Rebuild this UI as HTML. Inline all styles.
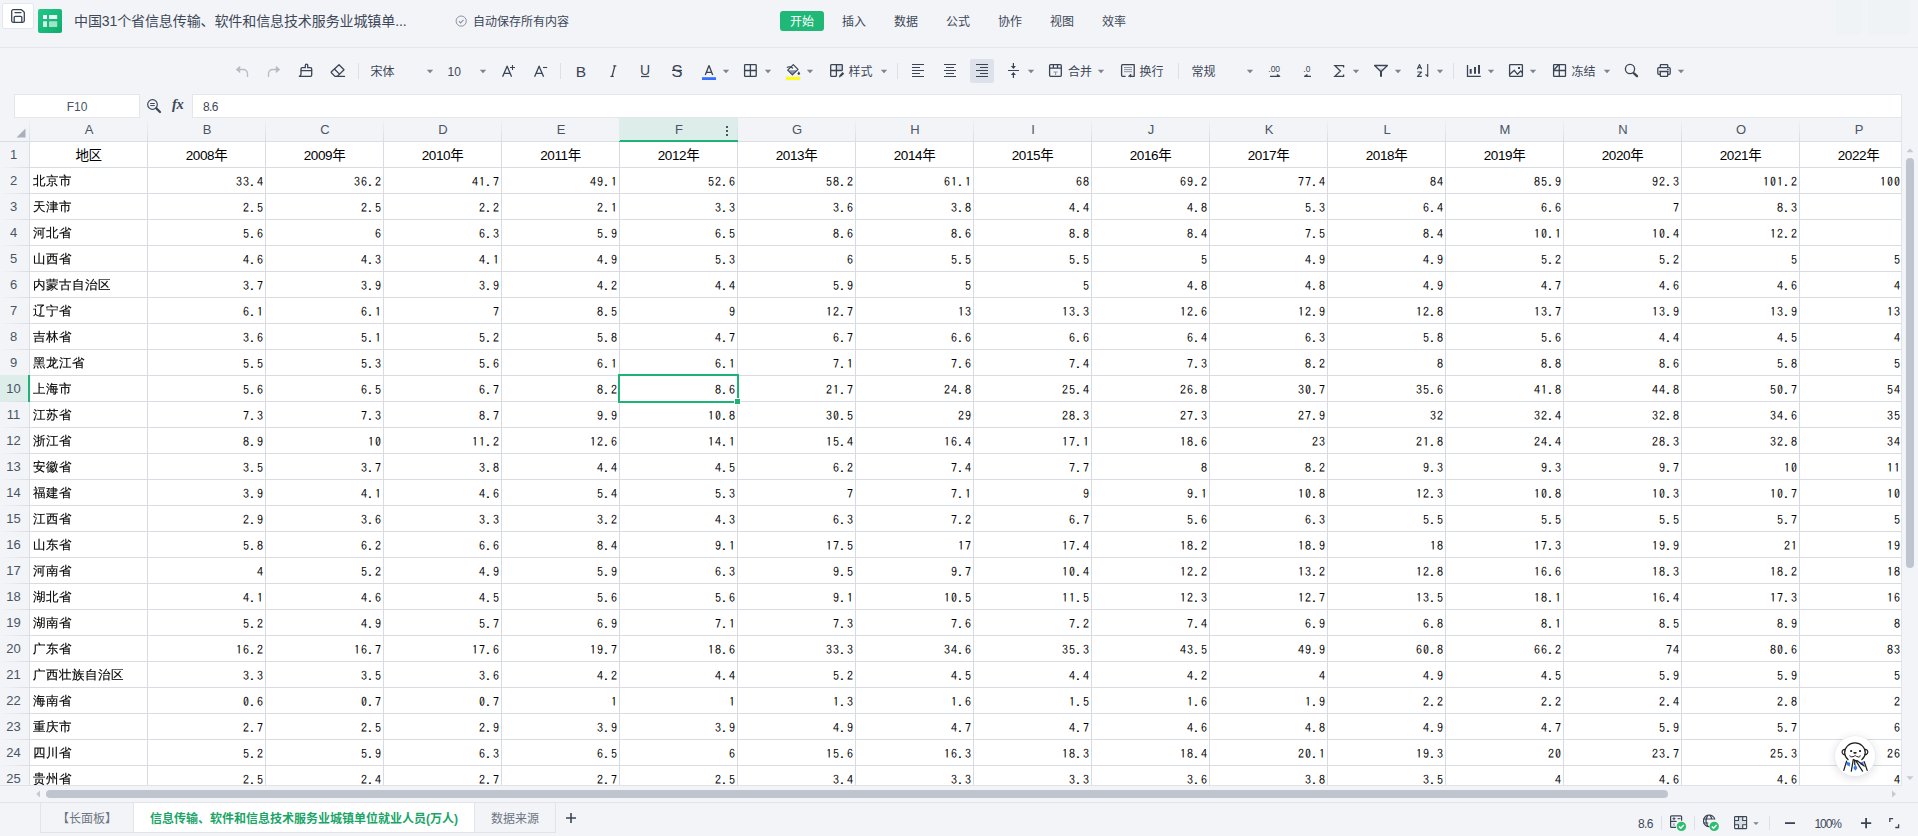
<!DOCTYPE html>
<html lang="zh-CN">
<head>
<meta charset="utf-8">
<title>中国31个省信息传输、软件和信息技术服务业城镇单位就业人员</title>
<style>
*{box-sizing:border-box;margin:0;padding:0}
html,body{width:1918px;height:836px;overflow:hidden;background:#f2f4f7}
body{position:relative;font-family:"Liberation Sans","Noto Sans CJK SC",sans-serif;color:#3d4757;font-size:12px}
.abs{position:absolute}
svg{position:absolute;overflow:visible}
.ic{stroke:#3b4455;fill:none;stroke-width:1.3;stroke-linecap:round;stroke-linejoin:round}
.lt{height:20px;line-height:20px;text-align:center;color:#3b4455}
.tt{position:absolute;top:63px;height:18px;line-height:18px;font-size:12px;color:#3d4757;white-space:nowrap}
/* title bar */
#savebtn{left:3px;top:4px;width:30px;height:24px;background:#fff;border-radius:2px;box-shadow:0 0 0 1px #e4e8ee}
#logo{left:38px;top:9px;width:24px;height:24px;border-radius:2px;background:linear-gradient(135deg,#22c888,#0eac6c)}
#title{left:74px;top:10px;height:22px;line-height:22px;font-size:14px;color:#3d4757;white-space:nowrap;letter-spacing:-.1px}
#autosave{left:473px;top:12px;height:20px;line-height:20px;font-size:12px;color:#3d4757;white-space:nowrap}
.menu{position:absolute;top:11px;width:44px;height:20px;line-height:22px;text-align:center;font-size:12px;color:#3d4757;border-radius:3px}
.menu.on{background:#1fb877;color:#fff}
#line1{left:0;top:47px;width:1918px;height:1px;background:#e4e7ec}
/* formula bar */
#namebox{left:14px;top:94px;width:126px;height:24px;background:#fff;border:1px solid #e3e6eb;text-align:center;line-height:24px;font-size:12px;color:#4a5363}
#fbox{left:192px;top:94px;width:1710px;height:24px;background:#fff;border:1px solid #e3e6eb;line-height:24px;font-size:12px;color:#3d4757;padding-left:10px;letter-spacing:-.6px}
/* grid */
#grid{left:0;top:118px;width:1902px;height:668px;overflow:hidden;background:#fff;border-right:1px solid #e1e4ea;border-bottom:1px solid #dfe2e8}
.ch,.r{display:flex;width:1918px}
.ch{height:24px;background:#f2f4f7;border-bottom:1px solid #d9dde4;position:relative}
.ch .corner{width:30px;height:23px;flex:none;background:linear-gradient(to bottom,rgba(217,221,228,0),rgba(217,221,228,1)) right top/1px 100% no-repeat}
.ch .c{flex:none;width:118px;height:23px;line-height:23px;text-align:center;font-size:13px;color:#4a5465;position:relative;background:linear-gradient(to bottom,rgba(217,221,228,0),rgba(217,221,228,1)) right top/1px 100% no-repeat}
.ch .c.sel{background-color:#dcedea;box-shadow:0 1px 0 #1db374, inset 0 -1px 0 #1db374,-1px 0 0 #dcedea,-1px 1px 0 #1db374}
.dots{position:absolute;right:10px;top:8px;width:2px;height:2px;background:#4a5465;box-shadow:0 4px 0 #4a5465,0 8px 0 #4a5465}
.r{height:26px}
.rh{width:30px;height:26px;line-height:25px;text-align:center;font-size:13px;color:#4a5465;background:#f2f4f7;border-right:1px solid #d9dde4;flex:none;background-image:linear-gradient(to right,rgba(217,221,228,0),rgba(217,221,228,1));background-position:left bottom;background-size:100% 1px;background-repeat:no-repeat;padding-right:2px}
.rh.sel{background-color:#dcedea;border-right:2px solid #1db374;padding-right:1px;box-shadow:0 -1px 0 #dcedea;position:relative}
.rh.sel:after{content:'';position:absolute;right:-2px;top:-1px;width:2px;height:1px;background:#1db374}
.d{width:118px;height:26px;line-height:27px;border-right:1px solid #d8dbe1;border-bottom:1px solid #d8dbe1;flex:none;white-space:nowrap;overflow:hidden;color:#000;font-size:13.33px}
.d.h{text-align:center;font-family:"Liberation Sans","Noto Sans CJK SC",sans-serif;font-size:13.500px;letter-spacing:-.4px}
.d.t{-webkit-text-stroke:.15px #000;padding-left:3px;font-size:12.500px;letter-spacing:.5px;font-family:"Liberation Sans","WenQuanYi Zen Hei","Noto Sans CJK SC",sans-serif}
.d.n{text-align:right;padding-right:1px;font-size:12px;letter-spacing:1px;font-family:IPAGothic,"Liberation Mono",monospace}
.d.p{width:101px;padding-right:0;border-right:none}
#selbox{left:618px;top:374px;width:121px;height:29px;border:2px solid #1db374;pointer-events:none}
#selhandle{left:734px;top:398px;width:7px;height:7px;background:#1db374;border:1px solid #fff}
/* scrollbars */
#vthumb{left:1906px;top:158px;width:8px;height:410px;border-radius:4px;background:#bfc5cf}
#hthumb{left:46px;top:790px;width:1622px;height:8px;border-radius:4px;background:#bfc5cf}
#line3{left:0;top:802px;width:1918px;height:1px;background:#e1e5ea}
/* sheet tabs */
.tab{position:absolute;top:803px;height:30px;line-height:33px;overflow:hidden;font-size:12px;color:#6d7583;text-align:center;border-right:1px solid #e1e5ea;border-bottom:1px solid #e1e5ea;white-space:nowrap}
.tab.on{background:#fff;color:#1aa568;font-weight:bold}
.st{position:absolute;top:815px;height:18px;line-height:18px;font-size:12px;color:#3d4757;letter-spacing:-.6px}
.sdiv{position:absolute;top:816px;width:1px;height:14px;background:#dfe2e8}
#mascot{left:1835px;top:736px;width:40px;height:40px;border-radius:50%;background:#fff;box-shadow:0 0 0 .6px #e6eaf2,0 2px 10px rgba(30,40,60,.16)}
</style>
</head>
<body>
<div id="savebtn" class="abs"></div>
<svg style="left:11px;top:9px" width="14" height="14" viewBox="0 0 14 14"><path class="ic" d="M2.2 .7h8.3l2.8 2.6v8.5a1.5 1.5 0 0 1-1.5 1.5H2.2A1.5 1.5 0 0 1 .7 11.800V2.2A1.500 1.500 0 0 1 2.200 .7z"/><path class="ic" d="M4 3.600h6"/><path class="ic" d="M3.200 13.200V8.300a1 1 0 0 1 1-1h5.600a1 1 0 0 1 1 1v4.900"/></svg>
<div id="logo" class="abs"></div>
<svg style="left:38px;top:9px" width="24" height="24" viewBox="0 0 24 24"><rect x="5" y="6.100" width="4" height="4" rx=".5" fill="#fff"/><rect x="11" y="6.100" width="8.200" height="4" rx=".5" fill="#fff" fill-opacity=".9"/><rect x="5" y="12.300" width="4" height="5.700" rx=".5" fill="#fff" fill-opacity=".8"/><rect x="11" y="12.300" width="8.200" height="5.700" rx=".5" fill="#fff" fill-opacity=".6"/></svg>
<div id="title" class="abs">中国31个省信息传输、软件和信息技术服务业城镇单...</div>
<svg style="left:455px;top:15px" width="12" height="12" viewBox="0 0 12 12"><circle cx="6.200" cy="6.100" r="5.100" fill="none" stroke="#8b93a1" stroke-width="1"/><path d="M3.900 6.200l1.700 1.700 2.900-3.100" fill="none" stroke="#8b93a1" stroke-width="1.100"/></svg>
<div id="autosave" class="abs">自动保存所有内容</div>
<div class="menu on" style="left:780px">开始</div>
<div class="menu" style="left:832px">插入</div>
<div class="menu" style="left:884px">数据</div>
<div class="menu" style="left:936px">公式</div>
<div class="menu" style="left:988px">协作</div>
<div class="menu" style="left:1040px">视图</div>
<div class="menu" style="left:1092px">效率</div>
<div class="abs" style="left:1836px;top:0;width:26px;height:35px;background:#eff3f6"></div>
<div class="abs" style="left:1868px;top:0;width:42px;height:35px;background:#f0f3f6"></div>
<div id="line1" class="abs"></div>

<!--TB0-->
<svg style="left:0;top:0" width="1918" height="94" viewBox="0 0 1918 94" fill="none" stroke="none">
<g stroke="#b6bbc5" stroke-width="1.300" fill="none"><path d="M239.500 69.500h3.800a4.200 4.200 0 0 1 4.200 4.200v3.200"/><path d="M276.500 69.500h-3.800a4.200 4.200 0 0 0-4.200 4.200v3.200"/></g>
<path d="M235.700 69.500l4.500-3.700v7.400z" fill="#b6bbc5"/><path d="M280.300 69.500l-4.500-3.700v7.400z" fill="#b6bbc5"/>
<g stroke="#3b4455" stroke-width="1.300" stroke-linejoin="round" stroke-linecap="round"><path d="M305.300 67.700v-2.300a1.200 1.200 0 0 1 2.400 0v2.300h2.800a1.200 1.200 0 0 1 1.200 1.200v6.200a1.200 1.200 0 0 1-1.200 1.200h-11.200c1.300-.5 1.700-1.300 1.700-2.400v-5a1.200 1.200 0 0 1 1.200-1.200z"/><path d="M301.200 70.700h10.300"/></g>
<g stroke="#3b4455" stroke-width="1.300" stroke-linejoin="round" stroke-linecap="round"><path d="M339 64.700l5 5-6.700 6.700h-2.300l-3.600-3.600a.8.800 0 0 1 0-1.100z"/><path d="M334.600 69.200l4.900 4.900"/><path d="M336.500 76.400h8"/></g>
<rect x="358.0" y="63" width="1" height="16" fill="#dde1e7"/>
<path d="M426.8 69.700h6.400l-3.200 3.600z" fill="#7c828e"/>
<path d="M479.8 69.700h6.400l-3.200 3.600z" fill="#7c828e"/>
<g stroke="#3b4455" stroke-width="1.300" stroke-linejoin="round" stroke-linecap="butt"><path d="M502.600 76.800l4.500-10.600 4.500 10.600M504.300 73.400h5.600"/><path d="M510 67.500h5M512.500 65v5" stroke-width="1.100"/><path d="M534.600 76.800l4.500-10.600 4.500 10.600M536.300 73.400h5.600"/><path d="M543 67.500h4.200" stroke-width="1.100"/></g>
<rect x="560.0" y="63" width="1" height="16" fill="#dde1e7"/>
<g stroke="#3b4455" stroke-width="1.300" stroke-linecap="round"><path d="M613.700 65.800h2.200M611 76.400h2.200M614.800 65.800l-2.700 10.600"/></g>
<path d="M641 76.500h8.200" stroke="#3b4455" stroke-width="1.200"/>
<path d="M672 70.400h10" stroke="#3b4455" stroke-width="1.200"/>
<g stroke="#3b4455" stroke-width="1.300" stroke-linejoin="round"><path d="M705.300 75l3.700-9.400 3.700 9.400M706.600 72.300h4.800"/></g>
<rect x="702" y="77.200" width="14" height="2.800" fill="#3370ff"/>
<path d="M722.8 69.700h6.400l-3.200 3.600z" fill="#7c828e"/>
<g stroke="#3b4455" stroke-width="1.300"><rect x="744.600" y="64.700" width="11.600" height="11.600" rx=".6"/><path d="M750.400 64.700v11.600M744.600 70.500h11.600"/></g>
<path d="M764.8 69.700h6.400l-3.200 3.600z" fill="#7c828e"/>
<path d="M788.700 70.200h8.400l-4.700 4.700z" fill="#8d94a2"/>
<g stroke="#3b4455" stroke-width="1.200" stroke-linejoin="round" stroke-linecap="round"><path d="M793.300 64.600l4.700 4.700-5.600 5.600-4.700-4.700z"/><path d="M787.300 67.300c1.800-.7 3.600-.4 5.300.8"/></g>
<path d="M798.800 71.300l1.300 2.300a1.300 1.300 0 1 1-2.600 0z" fill="#3b4455"/>
<rect x="785.500" y="76.500" width="15" height="3.800" fill="#e6e9ef"/><rect x="786" y="77" width="14" height="2.800" fill="#ffff00"/>
<path d="M806.8 69.700h6.400l-3.200 3.600z" fill="#7c828e"/>
<rect x="836.500" y="65" width="5.500" height="5.300" fill="#d5d9e1"/>
<g stroke="#3b4455" stroke-width="1.300" stroke-linejoin="round"><path d="M836.400 76.300h-5.100a.6.600 0 0 1-.6-.6v-10.400a.6.600 0 0 1 .6-.6h10.400a.6.600 0 0 1 .6.600v5.200"/><path d="M836.400 64.700v11.600M830.700 70.500h11.600"/></g>
<path d="M840 76.300l3.400-3.400" stroke="#3b4455" stroke-width="2.200" stroke-linecap="butt"/><path d="M838.700 77.500l.5-1.800 1.300 1.300z" fill="#3b4455"/>
<path d="M880.8 69.700h6.400l-3.200 3.600z" fill="#7c828e"/>
<rect x="897.0" y="63" width="1" height="16" fill="#dde1e7"/>
<path d="M912 64.5H924M912 67.5H920M912 70.5H924M912 73.5H920M912 76.5H924" stroke="#3b4455" stroke-width="1.200"/>
<path d="M944 64.5H956M946 67.5H954M944 70.5H956M946 73.5H954M944 76.5H956" stroke="#3b4455" stroke-width="1.200"/>
<rect x="970" y="59" width="24" height="24" rx="2" fill="#dde1e9"/>
<path d="M976 64.5H988M980 67.5H988M976 70.5H988M980 73.5H988M976 76.5H988" stroke="#3b4455" stroke-width="1.200"/>
<g stroke="#3b4455" stroke-width="1.200"><path d="M1008 70.500h11M1013.400 63v4.500M1013.400 78v-4.500"/></g>
<path d="M1010.900 66.100h5l-2.500 2.900zM1010.900 74.900h5l-2.500-2.900z" fill="#3b4455"/>
<path d="M1027.8 69.700h6.400l-3.200 3.600z" fill="#7c828e"/>
<g stroke="#3b4455" stroke-width="1.300"><rect x="1049.600" y="64.700" width="11.700" height="11.600" rx="1"/><path d="M1049.600 68.200h11.700M1053.400 64.700v3.500M1057.500 64.700v3.500"/></g>
<path d="M1053.500 72h4.200M1055.600 72v3" stroke="#8d94a2" stroke-width="1"/>
<path d="M1097.8 69.700h6.400l-3.200 3.600z" fill="#7c828e"/>
<g stroke="#3b4455" stroke-width="1.300" stroke-linejoin="round"><path d="M1125.600 76.300h-3a1 1 0 0 1-1-1v-9.600a1 1 0 0 1 1-1h11.600v11.600h-3.400"/></g>
<path d="M1128.300 76.300l2.700-2.200v2.900z" fill="#3b4455" stroke="#3b4455" stroke-width=".6"/>
<path d="M1124 67.500h8M1124 69.600h8M1124 71.700h8" stroke="#8d94a2" stroke-width="1"/>
<rect x="1178.0" y="63" width="1" height="16" fill="#dde1e7"/>
<path d="M1246.8 69.700h6.400l-3.200 3.600z" fill="#7c828e"/>
<g stroke="#3b4455" stroke-width="1.200"><path d="M1270 76.300h9.600M1304.400 76.300h6.600"/></g>
<path d="M1277.200 74.200l3 2.100h-3zM1307.200 74.200l-3 2.100h3z" fill="#3b4455" stroke="#3b4455" stroke-width=".5"/>
<text x="1268.300" y="72.200" font-size="9.800" font-family="Liberation Sans,sans-serif" fill="#3b4455" textLength="11.800" lengthAdjust="spacingAndGlyphs">.00</text><text x="1303.300" y="72.200" font-size="9.800" font-family="Liberation Sans,sans-serif" fill="#3b4455" textLength="7" lengthAdjust="spacingAndGlyphs">.0</text>
<path d="M1343.600 67.400v-1.700h-8.700l5.500 5.300-5.500 5.300h8.700v-1.700" stroke="#3b4455" stroke-width="1.300" stroke-linejoin="miter"/>
<path d="M1352.8 69.700h6.400l-3.200 3.600z" fill="#7c828e"/>
<path d="M1377.500 68.500h7l-3.500 3.200z" fill="#c9cdd5"/>
<path d="M1374.600 65.500h12.800l-6.400 6.300z" stroke="#3b4455" stroke-width="1.300" stroke-linejoin="round"/><path d="M1381 71v5.700" stroke="#3b4455" stroke-width="2"/>
<path d="M1394.8 69.700h6.400l-3.200 3.600z" fill="#7c828e"/>
<g stroke="#3b4455" stroke-width="1.100" stroke-linejoin="round"><path d="M1417.300 69.300l2.200-4.800 2.200 4.800M1418.100 67.600h2.800"/><path d="M1417.400 72h4.200l-4.200 4.400h4.400"/><path d="M1427.700 64v12.600"/></g>
<path d="M1425.200 74.800l2.500 2v-2z" fill="#3b4455" stroke="#3b4455" stroke-width=".5"/>
<path d="M1436.8 69.700h6.400l-3.200 3.600z" fill="#7c828e"/>
<rect x="1453.0" y="63" width="1" height="16" fill="#dde1e7"/>
<path d="M1467.500 65v11.400h13.300" stroke="#3b4455" stroke-width="1.300"/>
<path d="M1470.700 69v4.800M1475 67v6.800M1479 65v8.800" stroke="#3b4455" stroke-width="2"/>
<path d="M1487.8 69.700h6.400l-3.200 3.600z" fill="#7c828e"/>
<g stroke="#3b4455" stroke-width="1.300" stroke-linejoin="round"><rect x="1509.600" y="64.700" width="12.800" height="11.600" rx=".6"/><path d="M1509.800 74.300l4.500-4 3.200 4 3.200-3.300 1.800 1.700"/></g>
<rect x="1518" y="67" width="2" height="2" fill="#3b4455"/>
<path d="M1529.8 69.700h6.400l-3.200 3.600z" fill="#7c828e"/>
<g stroke="#3b4455" stroke-width="1.300"><rect x="1553.600" y="64.700" width="11.900" height="11.600" rx=".6"/><path d="M1559.300 64.700v11.600M1553.600 70.500h11.900M1554.300 69.500l4.500-4.700"/></g>
<path d="M1603.8 69.700h6.400l-3.200 3.600z" fill="#7c828e"/>
<circle cx="1630" cy="69" r="4.600" stroke="#3b4455" stroke-width="1.300"/><path d="M1634 73.400l3 2.800" stroke="#3b4455" stroke-width="2.300" stroke-linecap="round"/>
<g stroke="#3b4455" stroke-width="1.300" stroke-linejoin="round"><path d="M1660.300 67.700v-2.400a.7.700 0 0 1 .7-.7h6a.7.700 0 0 1 .7.700v2.400"/><path d="M1660.300 74.300h-1.500a1 1 0 0 1-1-1v-4.600a1 1 0 0 1 1-1h10.400a1 1 0 0 1 1 1v4.600a1 1 0 0 1-1 1h-1.500"/><path d="M1660.300 71.500h7.400v4.200a.7.700 0 0 1-.7.700h-6a.7.700 0 0 1-.7-.7zM1659.300 71.500h9.400"/></g>
<path d="M1667 69.600h1.700" stroke="#3b4455" stroke-width="1"/>
<path d="M1677.8 69.700h6.400l-3.200 3.600z" fill="#7c828e"/>
</svg>
<div class="tt" style="left:370.5px;">宋体</div>
<div class="tt" style="left:447.5px;">10</div>
<div class="abs lt" style="left:575px;top:62px;width:12px;font-size:15.500px">B</div>
<div class="abs lt" style="left:639px;top:60px;width:12px;font-size:14px">U</div>
<div class="abs lt" style="left:671px;top:61px;width:12px;font-size:16.500px">S</div>
<div class="tt" style="left:848.5px;">样式</div>
<div class="tt" style="left:1068px;">合并</div>
<div class="tt" style="left:1139.5px;">换行</div>
<div class="tt" style="left:1191.5px;">常规</div>
<div class="tt" style="left:1571.5px;">冻结</div>
<!--TB1-->
<div id="namebox" class="abs">F10</div>
<svg style="left:147px;top:99px" width="15" height="15" viewBox="0 0 15 15"><circle cx="5.500" cy="5.500" r="4.800" fill="none" stroke="#3d4757" stroke-width="1.200"/><path d="M3.200 4.500h4.600M3.200 6.600h4.600" stroke="#3d4757" stroke-width="1" fill="none"/><path d="M9.400 9.400l3.600 3.600" stroke="#3d4757" stroke-width="2.200" stroke-linecap="round"/></svg>
<div class="abs" style="left:172px;top:94px;height:20px;line-height:20px;font-family:'Liberation Serif',serif;font-style:italic;font-weight:bold;font-size:14.500px;color:#3d4757;letter-spacing:-.3px">fx</div>
<div id="fbox" class="abs">8.6</div>

<div id="grid" class="abs">
<div class="ch"><div class="corner"></div>
<div class="c">A</div>
<div class="c">B</div>
<div class="c">C</div>
<div class="c">D</div>
<div class="c">E</div>
<div class="c sel">F<i class="dots"></i></div>
<div class="c">G</div>
<div class="c">H</div>
<div class="c">I</div>
<div class="c">J</div>
<div class="c">K</div>
<div class="c">L</div>
<div class="c">M</div>
<div class="c">N</div>
<div class="c">O</div>
<div class="c">P</div>
</div>
<div class="r"><div class="rh">1</div><div class="d h">地区</div><div class="d h">2008年</div><div class="d h">2009年</div><div class="d h">2010年</div><div class="d h">2011年</div><div class="d h">2012年</div><div class="d h">2013年</div><div class="d h">2014年</div><div class="d h">2015年</div><div class="d h">2016年</div><div class="d h">2017年</div><div class="d h">2018年</div><div class="d h">2019年</div><div class="d h">2020年</div><div class="d h">2021年</div><div class="d h">2022年</div></div>
<div class="r"><div class="rh">2</div><div class="d t">北京市</div><div class="d n">33.4</div><div class="d n">36.2</div><div class="d n">41.7</div><div class="d n">49.1</div><div class="d n">52.6</div><div class="d n">58.2</div><div class="d n">61.1</div><div class="d n">68</div><div class="d n">69.2</div><div class="d n">77.4</div><div class="d n">84</div><div class="d n">85.9</div><div class="d n">92.3</div><div class="d n">101.2</div><div class="d n p">100</div></div>
<div class="r"><div class="rh">3</div><div class="d t">天津市</div><div class="d n">2.5</div><div class="d n">2.5</div><div class="d n">2.2</div><div class="d n">2.1</div><div class="d n">3.3</div><div class="d n">3.6</div><div class="d n">3.8</div><div class="d n">4.4</div><div class="d n">4.8</div><div class="d n">5.3</div><div class="d n">6.4</div><div class="d n">6.6</div><div class="d n">7</div><div class="d n">8.3</div><div class="d n p"></div></div>
<div class="r"><div class="rh">4</div><div class="d t">河北省</div><div class="d n">5.6</div><div class="d n">6</div><div class="d n">6.3</div><div class="d n">5.9</div><div class="d n">6.5</div><div class="d n">8.6</div><div class="d n">8.6</div><div class="d n">8.8</div><div class="d n">8.4</div><div class="d n">7.5</div><div class="d n">8.4</div><div class="d n">10.1</div><div class="d n">10.4</div><div class="d n">12.2</div><div class="d n p"></div></div>
<div class="r"><div class="rh">5</div><div class="d t">山西省</div><div class="d n">4.6</div><div class="d n">4.3</div><div class="d n">4.1</div><div class="d n">4.9</div><div class="d n">5.3</div><div class="d n">6</div><div class="d n">5.5</div><div class="d n">5.5</div><div class="d n">5</div><div class="d n">4.9</div><div class="d n">4.9</div><div class="d n">5.2</div><div class="d n">5.2</div><div class="d n">5</div><div class="d n p">5</div></div>
<div class="r"><div class="rh">6</div><div class="d t">内蒙古自治区</div><div class="d n">3.7</div><div class="d n">3.9</div><div class="d n">3.9</div><div class="d n">4.2</div><div class="d n">4.4</div><div class="d n">5.9</div><div class="d n">5</div><div class="d n">5</div><div class="d n">4.8</div><div class="d n">4.8</div><div class="d n">4.9</div><div class="d n">4.7</div><div class="d n">4.6</div><div class="d n">4.6</div><div class="d n p">4</div></div>
<div class="r"><div class="rh">7</div><div class="d t">辽宁省</div><div class="d n">6.1</div><div class="d n">6.1</div><div class="d n">7</div><div class="d n">8.5</div><div class="d n">9</div><div class="d n">12.7</div><div class="d n">13</div><div class="d n">13.3</div><div class="d n">12.6</div><div class="d n">12.9</div><div class="d n">12.8</div><div class="d n">13.7</div><div class="d n">13.9</div><div class="d n">13.9</div><div class="d n p">13</div></div>
<div class="r"><div class="rh">8</div><div class="d t">吉林省</div><div class="d n">3.6</div><div class="d n">5.1</div><div class="d n">5.2</div><div class="d n">5.8</div><div class="d n">4.7</div><div class="d n">6.7</div><div class="d n">6.6</div><div class="d n">6.6</div><div class="d n">6.4</div><div class="d n">6.3</div><div class="d n">5.8</div><div class="d n">5.6</div><div class="d n">4.4</div><div class="d n">4.5</div><div class="d n p">4</div></div>
<div class="r"><div class="rh">9</div><div class="d t">黑龙江省</div><div class="d n">5.5</div><div class="d n">5.3</div><div class="d n">5.6</div><div class="d n">6.1</div><div class="d n">6.1</div><div class="d n">7.1</div><div class="d n">7.6</div><div class="d n">7.4</div><div class="d n">7.3</div><div class="d n">8.2</div><div class="d n">8</div><div class="d n">8.8</div><div class="d n">8.6</div><div class="d n">5.8</div><div class="d n p">5</div></div>
<div class="r"><div class="rh sel">10</div><div class="d t">上海市</div><div class="d n">5.6</div><div class="d n">6.5</div><div class="d n">6.7</div><div class="d n">8.2</div><div class="d n">8.6</div><div class="d n">21.7</div><div class="d n">24.8</div><div class="d n">25.4</div><div class="d n">26.8</div><div class="d n">30.7</div><div class="d n">35.6</div><div class="d n">41.8</div><div class="d n">44.8</div><div class="d n">50.7</div><div class="d n p">54</div></div>
<div class="r"><div class="rh">11</div><div class="d t">江苏省</div><div class="d n">7.3</div><div class="d n">7.3</div><div class="d n">8.7</div><div class="d n">9.9</div><div class="d n">10.8</div><div class="d n">30.5</div><div class="d n">29</div><div class="d n">28.3</div><div class="d n">27.3</div><div class="d n">27.9</div><div class="d n">32</div><div class="d n">32.4</div><div class="d n">32.8</div><div class="d n">34.6</div><div class="d n p">35</div></div>
<div class="r"><div class="rh">12</div><div class="d t">浙江省</div><div class="d n">8.9</div><div class="d n">10</div><div class="d n">11.2</div><div class="d n">12.6</div><div class="d n">14.1</div><div class="d n">15.4</div><div class="d n">16.4</div><div class="d n">17.1</div><div class="d n">18.6</div><div class="d n">23</div><div class="d n">21.8</div><div class="d n">24.4</div><div class="d n">28.3</div><div class="d n">32.8</div><div class="d n p">34</div></div>
<div class="r"><div class="rh">13</div><div class="d t">安徽省</div><div class="d n">3.5</div><div class="d n">3.7</div><div class="d n">3.8</div><div class="d n">4.4</div><div class="d n">4.5</div><div class="d n">6.2</div><div class="d n">7.4</div><div class="d n">7.7</div><div class="d n">8</div><div class="d n">8.2</div><div class="d n">9.3</div><div class="d n">9.3</div><div class="d n">9.7</div><div class="d n">10</div><div class="d n p">11</div></div>
<div class="r"><div class="rh">14</div><div class="d t">福建省</div><div class="d n">3.9</div><div class="d n">4.1</div><div class="d n">4.6</div><div class="d n">5.4</div><div class="d n">5.3</div><div class="d n">7</div><div class="d n">7.1</div><div class="d n">9</div><div class="d n">9.1</div><div class="d n">10.8</div><div class="d n">12.3</div><div class="d n">10.8</div><div class="d n">10.3</div><div class="d n">10.7</div><div class="d n p">10</div></div>
<div class="r"><div class="rh">15</div><div class="d t">江西省</div><div class="d n">2.9</div><div class="d n">3.6</div><div class="d n">3.3</div><div class="d n">3.2</div><div class="d n">4.3</div><div class="d n">6.3</div><div class="d n">7.2</div><div class="d n">6.7</div><div class="d n">5.6</div><div class="d n">6.3</div><div class="d n">5.5</div><div class="d n">5.5</div><div class="d n">5.5</div><div class="d n">5.7</div><div class="d n p">5</div></div>
<div class="r"><div class="rh">16</div><div class="d t">山东省</div><div class="d n">5.8</div><div class="d n">6.2</div><div class="d n">6.6</div><div class="d n">8.4</div><div class="d n">9.1</div><div class="d n">17.5</div><div class="d n">17</div><div class="d n">17.4</div><div class="d n">18.2</div><div class="d n">18.9</div><div class="d n">18</div><div class="d n">17.3</div><div class="d n">19.9</div><div class="d n">21</div><div class="d n p">19</div></div>
<div class="r"><div class="rh">17</div><div class="d t">河南省</div><div class="d n">4</div><div class="d n">5.2</div><div class="d n">4.9</div><div class="d n">5.9</div><div class="d n">6.3</div><div class="d n">9.5</div><div class="d n">9.7</div><div class="d n">10.4</div><div class="d n">12.2</div><div class="d n">13.2</div><div class="d n">12.8</div><div class="d n">16.6</div><div class="d n">18.3</div><div class="d n">18.2</div><div class="d n p">18</div></div>
<div class="r"><div class="rh">18</div><div class="d t">湖北省</div><div class="d n">4.1</div><div class="d n">4.6</div><div class="d n">4.5</div><div class="d n">5.6</div><div class="d n">5.6</div><div class="d n">9.1</div><div class="d n">10.5</div><div class="d n">11.5</div><div class="d n">12.3</div><div class="d n">12.7</div><div class="d n">13.5</div><div class="d n">18.1</div><div class="d n">16.4</div><div class="d n">17.3</div><div class="d n p">16</div></div>
<div class="r"><div class="rh">19</div><div class="d t">湖南省</div><div class="d n">5.2</div><div class="d n">4.9</div><div class="d n">5.7</div><div class="d n">6.9</div><div class="d n">7.1</div><div class="d n">7.3</div><div class="d n">7.6</div><div class="d n">7.2</div><div class="d n">7.4</div><div class="d n">6.9</div><div class="d n">6.8</div><div class="d n">8.1</div><div class="d n">8.5</div><div class="d n">8.9</div><div class="d n p">8</div></div>
<div class="r"><div class="rh">20</div><div class="d t">广东省</div><div class="d n">16.2</div><div class="d n">16.7</div><div class="d n">17.6</div><div class="d n">19.7</div><div class="d n">18.6</div><div class="d n">33.3</div><div class="d n">34.6</div><div class="d n">35.3</div><div class="d n">43.5</div><div class="d n">49.9</div><div class="d n">60.8</div><div class="d n">66.2</div><div class="d n">74</div><div class="d n">80.6</div><div class="d n p">83</div></div>
<div class="r"><div class="rh">21</div><div class="d t">广西壮族自治区</div><div class="d n">3.3</div><div class="d n">3.5</div><div class="d n">3.6</div><div class="d n">4.2</div><div class="d n">4.4</div><div class="d n">5.2</div><div class="d n">4.5</div><div class="d n">4.4</div><div class="d n">4.2</div><div class="d n">4</div><div class="d n">4.9</div><div class="d n">4.5</div><div class="d n">5.9</div><div class="d n">5.9</div><div class="d n p">5</div></div>
<div class="r"><div class="rh">22</div><div class="d t">海南省</div><div class="d n">0.6</div><div class="d n">0.7</div><div class="d n">0.7</div><div class="d n">1</div><div class="d n">1</div><div class="d n">1.3</div><div class="d n">1.6</div><div class="d n">1.5</div><div class="d n">1.6</div><div class="d n">1.9</div><div class="d n">2.2</div><div class="d n">2.2</div><div class="d n">2.4</div><div class="d n">2.8</div><div class="d n p">2</div></div>
<div class="r"><div class="rh">23</div><div class="d t">重庆市</div><div class="d n">2.7</div><div class="d n">2.5</div><div class="d n">2.9</div><div class="d n">3.9</div><div class="d n">3.9</div><div class="d n">4.9</div><div class="d n">4.7</div><div class="d n">4.7</div><div class="d n">4.6</div><div class="d n">4.8</div><div class="d n">4.9</div><div class="d n">4.7</div><div class="d n">5.9</div><div class="d n">5.7</div><div class="d n p">6</div></div>
<div class="r"><div class="rh">24</div><div class="d t">四川省</div><div class="d n">5.2</div><div class="d n">5.9</div><div class="d n">6.3</div><div class="d n">6.5</div><div class="d n">6</div><div class="d n">15.6</div><div class="d n">16.3</div><div class="d n">18.3</div><div class="d n">18.4</div><div class="d n">20.1</div><div class="d n">19.3</div><div class="d n">20</div><div class="d n">23.7</div><div class="d n">25.3</div><div class="d n p">26</div></div>
<div class="r"><div class="rh">25</div><div class="d t">贵州省</div><div class="d n">2.5</div><div class="d n">2.4</div><div class="d n">2.7</div><div class="d n">2.7</div><div class="d n">2.5</div><div class="d n">3.4</div><div class="d n">3.3</div><div class="d n">3.3</div><div class="d n">3.6</div><div class="d n">3.8</div><div class="d n">3.5</div><div class="d n">4</div><div class="d n">4.6</div><div class="d n">4.6</div><div class="d n p">4</div></div>
</div>
<div id="selbox" class="abs"></div>
<div id="selhandle" class="abs"></div>
<!--B0-->
<div id="vthumb" class="abs"></div>
<div id="hthumb" class="abs"></div>
<div id="line3" class="abs"></div>
<svg style="left:0;top:0" width="1918" height="836" viewBox="0 0 1918 836" fill="none">
<path d="M1906.500 152.200h7l-3.500-3.800z" fill="#c4c9d2"/>
<path d="M1906.500 776.200h7l-3.500 3.800z" fill="#c4c9d2"/>
<path d="M40 790.500v7l-3.800-3.500z" fill="#c4c9d2"/>
<path d="M1892 790.500v7l4-3.500z" fill="#c4c9d2"/>
<path d="M25.500 128.500v9h-9z" fill="#a9b0bc"/>
<path d="M566 818h10M571 813v10" stroke="#3b4455" stroke-width="1.600"/>
<rect x="1661" y="816" width="1" height="14" fill="#dde1e7"/><rect x="1694" y="816" width="1" height="14" fill="#dde1e7"/><rect x="1769" y="816" width="1" height="14" fill="#dde1e7"/>
<g stroke="#3b4455" stroke-width="1.200" stroke-linejoin="round"><path d="M1676 827.400h-4.400a1 1 0 0 1-1-1v-9.600a1 1 0 0 1 1-1h9a1 1 0 0 1 1 1v4"/><path d="M1670.600 821.400h6"/></g>
<path d="M1672.500 818.700h3M1674 817.200v3M1677.500 818.700h3" stroke="#3b4455" stroke-width="1"/><path d="M1672.700 823.300l2.400 2.400M1675.100 823.300l-2.400 2.400" stroke="#8d94a2" stroke-width=".9"/>
<circle cx="1681.400" cy="826.400" r="4.700" fill="#2dbf6f"/><path d="M1679 826.400l1.800 1.900 3-3.300" stroke="#fff" stroke-width="1.400"/>
<g stroke="#3b4455" stroke-width="1.200"><path d="M1709.500 826.700a5.800 5.800 0 1 1 5.400-7.200"/><path d="M1707.800 826a9 9 0 0 1 0-10.300M1710 815.300a8 8 0 0 1 1.800 4M1703.300 819h10.500M1703.300 823h5"/></g>
<circle cx="1714.200" cy="826.400" r="4.700" fill="#2dbf6f"/><path d="M1711.800 826.400l1.800 1.900 3-3.300" stroke="#fff" stroke-width="1.400"/>
<rect x="1735" y="817" width="11.400" height="11.400" fill="#d8dce3"/><rect x="1735" y="817" width="3.300" height="3.300" fill="#f2f4f7"/><rect x="1743" y="817" width="3.300" height="3.300" fill="#f2f4f7"/><rect x="1735" y="825" width="3.300" height="3.300" fill="#f2f4f7"/><rect x="1743" y="825" width="3.300" height="3.300" fill="#f2f4f7"/><g stroke="#3b4455" stroke-width="1.100"><rect x="1734.600" y="816.600" width="12" height="12" rx=".6"/></g><path d="M1738.500 816.600v3.900h-3.900M1742.700 816.600v3.900h3.900M1738.500 828.600v-3.900h-3.900M1742.700 828.600v-3.900h3.900" stroke="#3b4455" stroke-width="1.100"/>
<path d="M1753.200 822.200h5.600l-2.800 2.900z" fill="#7c828e"/>
<path d="M1785 823.100h10" stroke="#3b4455" stroke-width="1.800"/><path d="M1861 823.200h10.200M1866.100 818.100v10.200" stroke="#3b4455" stroke-width="1.800"/>
<path d="M1889.800 822v-3.300h3.300M1895.300 827.500h3.300v-3.300" stroke="#3b4455" stroke-width="1.300"/>
</svg>
<div class="tab" style="left:40px;width:94px;border-left:1px solid #e1e5ea">【长面板】</div>
<div class="tab on" style="left:134px;width:341px">信息传输、软件和信息技术服务业城镇单位就业人员(万人)</div>
<div class="tab" style="left:475px;width:81px">数据来源</div>
<div class="st" style="left:1638px">8.6</div>
<div class="st" style="left:1814.500px;letter-spacing:-1.100px">100%</div>
<div id="mascot" class="abs"></div>
<svg style="left:1835px;top:736px" width="40" height="40" viewBox="0 0 40 40" fill="none"><path d="M11.300 25.800l3.900 1-.4 3.600-3-1.400zM24.700 27l3.600-1.500.4 3.700-2.600-.3zM20.400 28.600l2 3.300-2 2.900-2.100-2.900z" fill="#2f7cf6"/><g stroke="#1f1f1f" stroke-width="1.250" stroke-linecap="round" stroke-linejoin="round"><path d="M9.900 13.300a2.700 2.700 0 1 0 .6 5.300M30 13.300a2.700 2.700 0 1 1-.6 5.300" fill="#fff"/><path d="M13 23.600a10.300 9.600 0 1 1 13.900 0" fill="#fff"/><path d="M14.900 19.700c.2 1 .7 1.300 1.300 1.200l2.700-.5c.6-.3.900-1 1.200-1 .4 0 .7.700 1.400 1l2.400.7c.7.100 1-.5 1.200-1.400" stroke-width="1"/><path d="M11.600 25.100l-2.800 9.300M29.200 25.600l3 8.800"/><path d="M16.300 35.200l2-11.700 1.300.6.200 4.500M20.700 24.500l6.800 10.700M22 24.500l7.200 5.500"/></g><rect x="15.200" y="14.200" width="1.900" height="1.700" fill="#111"/><rect x="24.100" y="14.200" width="1.900" height="1.700" fill="#111"/><ellipse cx="20" cy="16.800" rx="1.800" ry=".85" fill="#111"/></svg>
<!--B1-->
</body>
</html>
